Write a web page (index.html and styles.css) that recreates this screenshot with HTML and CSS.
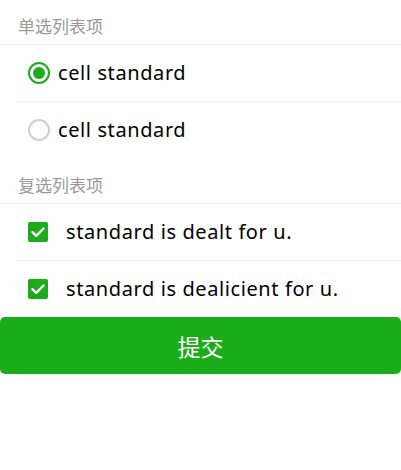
FILE: index.html
```html
<!DOCTYPE html>
<html>
<head>
<meta charset="utf-8">
<link rel="stylesheet" href="styles.css">
</head>
<body>
<div class="page">
  <div class="title">单选列表项</div>
  <div class="group">
    <div class="cell">
      <span class="radio checked"></span>
      <span class="label">cell standard</span>
    </div>
    <div class="cell">
      <span class="radio"></span>
      <span class="label">cell standard</span>
    </div>
  </div>
  <div class="title title-next">复选列表项</div>
  <div class="group">
    <div class="cell">
      <span class="checkbox"><svg viewBox="0 0 20 20" width="20" height="20"><path d="M4.5 10.2 L8.3 13.8 L15.5 6.5" fill="none" stroke="#fff" stroke-width="2.4" stroke-linecap="round" stroke-linejoin="round"/></svg></span>
      <span class="label check-label">standard is dealt for u.</span>
    </div>
    <div class="cell">
      <span class="checkbox"><svg viewBox="0 0 20 20" width="20" height="20"><path d="M4.5 10.2 L8.3 13.8 L15.5 6.5" fill="none" stroke="#fff" stroke-width="2.4" stroke-linecap="round" stroke-linejoin="round"/></svg></span>
      <span class="label check-label">standard is dealicient for u.</span>
    </div>
  </div>
  <button class="submit">提交</button>
</div>
</body>
</html>
```
FILE: styles.css
```css
html, body {
  margin: 0;
  padding: 0;
  background: #fff;
}
body {
  font-family: "Noto Sans", "Noto Sans CJK SC", sans-serif;
  color: #000;
}
.page {
  display: flex;
  flex-direction: column;
}
.title {
  height: 44px;
  box-sizing: border-box;
  padding: 15px 0 0 18px;
  font-size: 17px;
  line-height: 22px;
  color: #999;
  font-family: "Noto Sans CJK SC", sans-serif;
}
.title-next {
  height: 45px;
  padding-top: 16px;
}
.group {
  border-top: 1px solid #f0f0f0;
}
.cell {
  height: 56px;
  display: flex;
  align-items: center;
  padding-left: 28px;
  position: relative;
}
.cell + .cell::before {
  content: "";
  position: absolute;
  left: 16px;
  right: 0;
  top: 0;
  border-top: 1px solid #f0f0f0;
}
.cell + .cell {
  height: 57px;
}
.label {
  font-size: 20px;
  letter-spacing: 0.6px;
  line-height: 24px;
  margin-left: 8px;
}
.check-label {
  margin-left: 18px;
}
.radio {
  width: 22px;
  height: 22px;
  box-sizing: border-box;
  border: 2px solid #cfcfcf;
  border-radius: 50%;
  display: flex;
  align-items: center;
  justify-content: center;
  flex: none;
}
.radio.checked {
  border-color: #1aad19;
}
.radio.checked::after {
  content: "";
  width: 12px;
  height: 12px;
  border-radius: 50%;
  background: #1aad19;
}
.checkbox {
  width: 20px;
  height: 20px;
  border-radius: 2px;
  background: #1aad19;
  flex: none;
  display: flex;
}
.submit {
  margin: 0;
  height: 57px;
  border: none;
  border-radius: 5px;
  background: #1aad19;
  color: #fff;
  font-size: 23px;
  font-family: "Noto Sans CJK SC", sans-serif;
  width: 100%;
}
```
